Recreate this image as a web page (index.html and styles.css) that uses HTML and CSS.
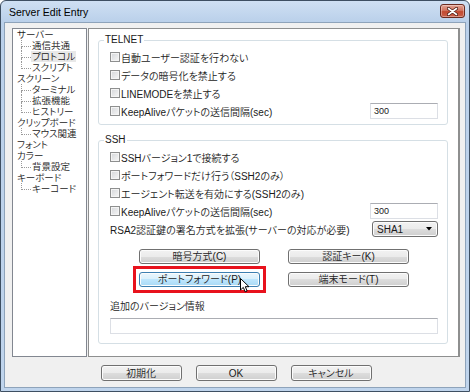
FILE: index.html
```html
<!DOCTYPE html>
<html lang="ja">
<head>
  <meta charset="UTF-8" />
  <title>Server Edit Entry</title>
  <link rel="stylesheet" href="styles.css">
</head>
<body>
  <div class="window">
    <div class="titlebar">
      <span class="title">Server Edit Entry</span>
      <span class="close">
        <svg width="11" height="9" viewBox="0 0 11 9"><path d="M1.5 1.5 L9.5 7.5 M9.5 1.5 L1.5 7.5" stroke="#4a1a12" stroke-width="3.2" stroke-linecap="round"/><path d="M1.5 1.5 L9.5 7.5 M9.5 1.5 L1.5 7.5" stroke="#fff" stroke-width="1.6" stroke-linecap="round"/></svg>
      </span>
    </div>

    <div class="client">
      <div class="main">
        <ul class="tree">
          <li class="node"><span>サーバー</span></li>
          <li class="leaf"><i class="branch"></i><span>通信共通</span></li>
          <li class="leaf"><i class="branch"></i><span class="selected">プロトコル</span></li>
          <li class="leaf last"><i class="branch"></i><span>スクリプト</span></li>
          <li class="node"><span>スクリーン</span></li>
          <li class="leaf"><i class="branch"></i><span>ターミナル</span></li>
          <li class="leaf"><i class="branch"></i><span>拡張機能</span></li>
          <li class="leaf last"><i class="branch"></i><span>ヒストリー</span></li>
          <li class="node"><span>クリップボード</span></li>
          <li class="leaf last"><i class="branch"></i><span>マウス関連</span></li>
          <li class="node"><span>フォント</span></li>
          <li class="node"><span>カラー</span></li>
          <li class="leaf last"><i class="branch"></i><span>背景設定</span></li>
          <li class="node"><span>キーボード</span></li>
          <li class="leaf last"><i class="branch"></i><span>キーコード</span></li>
        </ul>

        <div class="sheet">
          <fieldset class="group">
            <legend>TELNET</legend>
            <div class="row"><span class="check"></span>自動ユーザー認証を行わない</div>
            <div class="row"><span class="check"></span>データの暗号化を禁止する</div>
            <div class="row"><span class="check"></span>LINEMODEを禁止する</div>
            <div class="row"><span class="check"></span>KeepAliveパケットの送信間隔(sec)<span class="edit">300</span></div>
          </fieldset>

          <fieldset class="group ssh">
            <legend>SSH</legend>
            <div class="row"><span class="check"></span>SSHバージョン1で接続する</div>
            <div class="row"><span class="check"></span>ポートフォワードだけ行う（SSH2のみ）</div>
            <div class="row"><span class="check"></span>エージェント転送を有効にする(SSH2のみ)</div>
            <div class="row"><span class="check"></span>KeepAliveパケットの送信間隔(sec)<span class="edit">300</span></div>
            <div class="row">RSA2認証鍵の署名方式を拡張(サーバーの対応が必要)
              <span class="select">SHA1<svg width="6" height="4" viewBox="0 0 6 4"><path d="M0 0 H6 L3 3.5 Z" fill="#000"/></svg></span>
            </div>

            <div class="buttons">
              <button class="btn">暗号方式(C)</button>
              <button class="btn">認証キー(K)</button>
              <div class="highlight">
                <button class="btn hot">ポートフォワード(P)</button>
                <svg class="cursor" width="11" height="15" viewBox="0 0 11 15"><path d="M0.5 0.5 V12 L3.3 9.4 L5.2 13.8 L7.1 13 L5.3 8.7 H9 Z" fill="#fff" stroke="#000" stroke-width="1" stroke-linejoin="round"/></svg>
              </div>
              <button class="btn">端末モード(T)</button>
            </div>

            <div class="caption">追加のバージョン情報</div>
            <div class="edit wide"></div>
          </fieldset>
        </div>
      </div>

      <div class="actions">
        <button class="btn">初期化</button>
        <button class="btn">OK</button>
        <button class="btn">キャンセル</button>
      </div>
    </div>
  </div>
</body>
</html>
```

FILE: styles.css
```css
* { box-sizing: border-box; }
body {
  margin: 0;
  width: 470px;
  height: 392px;
  overflow: hidden;
  background: #fff;
  font-family: "Liberation Sans", "Noto Sans CJK JP", sans-serif;
  font-size: 10px;
  font-weight: 350;
  font-feature-settings: "palt" 1;
  color: #1a1a1a;
}
.window {
  width: 470px;
  height: 392px;
  border: 1px solid #3e4f62;
  border-radius: 6px 6px 0 0;
  background: linear-gradient(#cfe0f3, #bad0ea 21px, #bfd4ec);
  padding: 0 3px 3px 3px;
  display: flex;
  flex-direction: column;
}
.titlebar {
  height: 21px;
  display: flex;
  align-items: center;
  justify-content: space-between;
  padding: 0 1px 0 5px;
}
.title { font-size: 10.5px; font-weight: 400; color: #000; }
.close {
  width: 25px;
  height: 14px;
  margin-top: -1px;
  border: 1px solid #6b2a1f;
  border-radius: 3px;
  background: linear-gradient(#e2a394, #d27561 45%, #c24a31 55%, #c9604a);
  box-shadow: inset 0 0 0 1px rgba(255, 255, 255, 0.35);
  display: flex;
  align-items: center;
  justify-content: center;
}
.client {
  flex: 1;
  background: #f0f0f0;
  border: 1px solid #8ea3ba;
  padding: 5px 5px 0 7px;
  display: flex;
  flex-direction: column;
}
.main {
  height: 329px;
  display: flex;
  gap: 1px;
}

/* tree */
.tree {
  width: 75px;
  margin: 0;
  padding: 0 0 0 4px;
  list-style: none;
  background: #fff;
  border: 1px solid #828790;
  font-size: 9.5px;
}
.tree li {
  height: 11px;
  line-height: 11px;
  display: flex;
  white-space: nowrap;
}
.tree .node span { padding: 0 1px 0 0; }
.branch {
  width: 10px;
  margin-left: 4px;
  display: flex;
  flex-direction: column;
}
.branch::before {
  content: "";
  height: 6px;
  border-left: 1px dotted #9a9a9a;
  border-bottom: 1px dotted #9a9a9a;
}
.branch::after {
  content: "";
  flex: 1;
  border-left: 1px dotted #9a9a9a;
}
.leaf.last .branch::after { border-left: none; }
.leaf span { padding: 0 1px; }
.selected { background: #e8e8e8; }

/* property sheet */
.sheet {
  flex: 1;
  background: #fff;
  border: 1px solid #8e8f8f;
  border-right-width: 2px;
  padding: 5px 10px 0 9px;
}
.group {
  margin: 0;
  padding: 2px 9px 4px 11px;
  border: 1px solid #d5dfe5;
  border-radius: 3px;
}
.group legend {
  margin-left: -6px;
  padding: 0 1px;
  line-height: 12px;
  height: 12px;
}
.group.ssh { margin-top: 9px; padding-bottom: 9px; }
.row {
  height: 18px;
  display: flex;
  align-items: center;
  white-space: nowrap;
}
.check {
  width: 10px;
  height: 10px;
  margin-right: 1px;
  border: 1px solid #8e8f8f;
  background: linear-gradient(135deg, #d4d6d9, #f7f7f7);
  box-shadow: inset 0 0 0 1px #f4f4f4;
}
.edit {
  margin-left: auto;
  width: 68px;
  height: 16px;
  line-height: 14px;
  padding-left: 3px;
  border: 1px solid #dcdfe5;
  border-top-color: #abadb3;
  background: #fff;
  font-size: 9px;
}
.edit.wide { width: 100%; margin-top: 4px; }
.select {
  margin-left: auto;
  width: 66px;
  height: 16px;
  padding: 0 5px 0 4px;
  display: flex;
  align-items: center;
  justify-content: space-between;
  border: 1px solid #707070;
  border-radius: 3px;
  background: linear-gradient(#f2f2f2, #ebebeb 50%, #dddddd 50%, #cfcfcf);
  box-shadow: inset 0 0 0 1px #fcfcfc;
}

.buttons {
  margin-top: 11px;
  display: grid;
  grid-template-columns: 134px 134px;
  column-gap: 15px;
  row-gap: 2px;
  justify-content: center;
  justify-items: center;
  align-items: center;
}
.btn {
  width: 121px;
  height: 15px;
  padding: 0;
  border: 1px solid #707070;
  border-radius: 3px;
  background: linear-gradient(#f2f2f2, #ebebeb 50%, #dddddd 50%, #cfcfcf);
  box-shadow: inset 0 0 0 1px #fcfcfc;
  font: inherit;
  line-height: 13px;
  color: #1a1a1a;
}
.btn.hot {
  border-color: #3c7fb1;
  background: linear-gradient(#eaf6fd, #d9f0fc 50%, #bee6fd 50%, #a7d9f5);
}
.highlight {
  position: relative;
  padding: 3px;
  border: 3px solid #e8121d;
}
.highlight .btn { display: block; }
.cursor {
  position: absolute;
  left: 104px;
  top: 9px;
}
.caption {
  margin-top: 7px;
  line-height: 14px;
}

.actions {
  margin-top: 8px;
  display: flex;
  justify-content: center;
  gap: 14px;
}
.actions .btn { width: 81px; height: 16px; }
```
